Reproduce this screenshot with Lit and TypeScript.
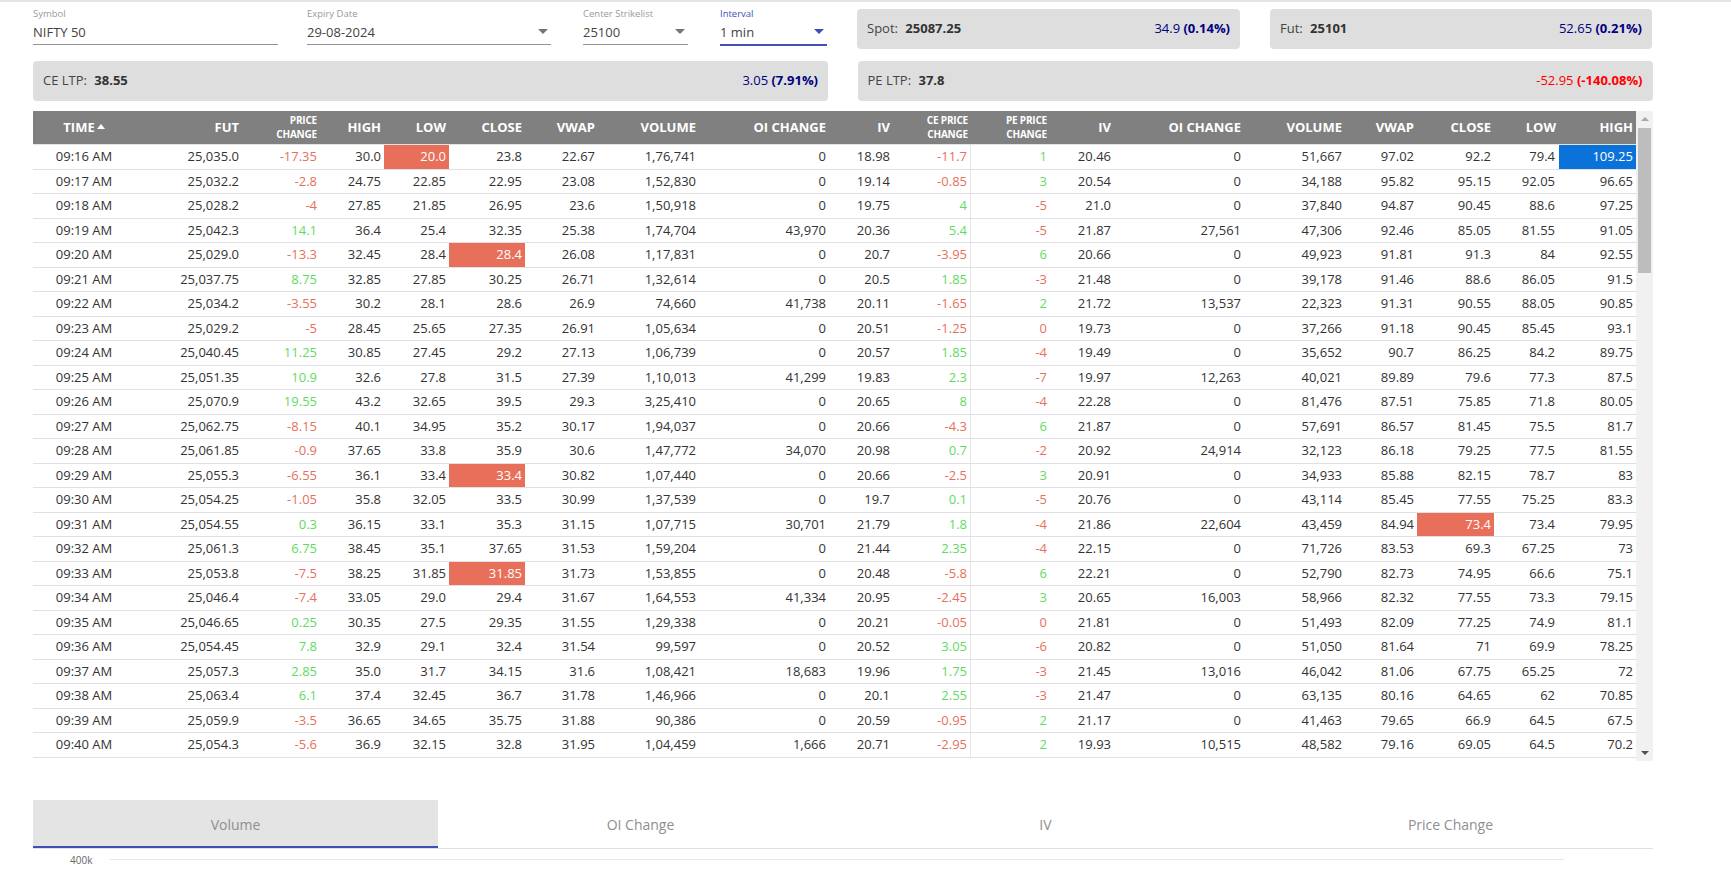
import { LitElement, html, css } from "lit";
import { customElement } from "lit/decorators.js";

const RAW = `09:16 AM|25,035.0|-17.35|30.0|20.0|23.8|22.67|1,76,741|0|18.98|-11.7|1|20.46|0|51,667|97.02|92.2|79.4|109.25
09:17 AM|25,032.2|-2.8|24.75|22.85|22.95|23.08|1,52,830|0|19.14|-0.85|3|20.54|0|34,188|95.82|95.15|92.05|96.65
09:18 AM|25,028.2|-4|27.85|21.85|26.95|23.6|1,50,918|0|19.75|4|-5|21.0|0|37,840|94.87|90.45|88.6|97.25
09:19 AM|25,042.3|14.1|36.4|25.4|32.35|25.38|1,74,704|43,970|20.36|5.4|-5|21.87|27,561|47,306|92.46|85.05|81.55|91.05
09:20 AM|25,029.0|-13.3|32.45|28.4|28.4|26.08|1,17,831|0|20.7|-3.95|6|20.66|0|49,923|91.81|91.3|84|92.55
09:21 AM|25,037.75|8.75|32.85|27.85|30.25|26.71|1,32,614|0|20.5|1.85|-3|21.48|0|39,178|91.46|88.6|86.05|91.5
09:22 AM|25,034.2|-3.55|30.2|28.1|28.6|26.9|74,660|41,738|20.11|-1.65|2|21.72|13,537|22,323|91.31|90.55|88.05|90.85
09:23 AM|25,029.2|-5|28.45|25.65|27.35|26.91|1,05,634|0|20.51|-1.25|0|19.73|0|37,266|91.18|90.45|85.45|93.1
09:24 AM|25,040.45|11.25|30.85|27.45|29.2|27.13|1,06,739|0|20.57|1.85|-4|19.49|0|35,652|90.7|86.25|84.2|89.75
09:25 AM|25,051.35|10.9|32.6|27.8|31.5|27.39|1,10,013|41,299|19.83|2.3|-7|19.97|12,263|40,021|89.89|79.6|77.3|87.5
09:26 AM|25,070.9|19.55|43.2|32.65|39.5|29.3|3,25,410|0|20.65|8|-4|22.28|0|81,476|87.51|75.85|71.8|80.05
09:27 AM|25,062.75|-8.15|40.1|34.95|35.2|30.17|1,94,037|0|20.66|-4.3|6|21.87|0|57,691|86.57|81.45|75.5|81.7
09:28 AM|25,061.85|-0.9|37.65|33.8|35.9|30.6|1,47,772|34,070|20.98|0.7|-2|20.92|24,914|32,123|86.18|79.25|77.5|81.55
09:29 AM|25,055.3|-6.55|36.1|33.4|33.4|30.82|1,07,440|0|20.66|-2.5|3|20.91|0|34,933|85.88|82.15|78.7|83
09:30 AM|25,054.25|-1.05|35.8|32.05|33.5|30.99|1,37,539|0|19.7|0.1|-5|20.76|0|43,114|85.45|77.55|75.25|83.3
09:31 AM|25,054.55|0.3|36.15|33.1|35.3|31.15|1,07,715|30,701|21.79|1.8|-4|21.86|22,604|43,459|84.94|73.4|73.4|79.95
09:32 AM|25,061.3|6.75|38.45|35.1|37.65|31.53|1,59,204|0|21.44|2.35|-4|22.15|0|71,726|83.53|69.3|67.25|73
09:33 AM|25,053.8|-7.5|38.25|31.85|31.85|31.73|1,53,855|0|20.48|-5.8|6|22.21|0|52,790|82.73|74.95|66.6|75.1
09:34 AM|25,046.4|-7.4|33.05|29.0|29.4|31.67|1,64,553|41,334|20.95|-2.45|3|20.65|16,003|58,966|82.32|77.55|73.3|79.15
09:35 AM|25,046.65|0.25|30.35|27.5|29.35|31.55|1,29,338|0|20.21|-0.05|0|21.81|0|51,493|82.09|77.25|74.9|81.1
09:36 AM|25,054.45|7.8|32.9|29.1|32.4|31.54|99,597|0|20.52|3.05|-6|20.82|0|51,050|81.64|71|69.9|78.25
09:37 AM|25,057.3|2.85|35.0|31.7|34.15|31.6|1,08,421|18,683|19.96|1.75|-3|21.45|13,016|46,042|81.06|67.75|65.25|72
09:38 AM|25,063.4|6.1|37.4|32.45|36.7|31.78|1,46,966|0|20.1|2.55|-3|21.47|0|63,135|80.16|64.65|62|70.85
09:39 AM|25,059.9|-3.5|36.65|34.65|35.75|31.88|90,386|0|20.59|-0.95|2|21.17|0|41,463|79.65|66.9|64.5|67.5
09:40 AM|25,054.3|-5.6|36.9|32.15|32.8|31.95|1,04,459|1,666|20.71|-2.95|2|19.93|10,515|48,582|79.16|69.05|64.5|70.2`;

const ROWS = RAW.split("\n").map((l) => l.split("|"));
const WIDTHS = [102, 107, 78, 64, 65, 76, 73, 101, 130, 64, 78, 79, 64, 130, 101, 72, 77, 65, 77];
const HEAD: [string, boolean][] = [
  ["FUT", false], ["PRICE<br>CHANGE", true], ["HIGH", false], ["LOW", false], ["CLOSE", false], ["VWAP", false],
  ["VOLUME", false], ["OI CHANGE", false], ["IV", false], ["CE PRICE<br>CHANGE", true], ["PE PRICE<br>CHANGE", true], ["IV", false],
  ["OI CHANGE", false], ["VOLUME", false], ["VWAP", false], ["CLOSE", false], ["LOW", false], ["HIGH", false],
];
const HILITE: Record<string, string> = {
  "0:4": "hot", "4:5": "hot", "13:5": "hot", "17:5": "hot", "15:16": "hot", "0:18": "cool",
};
const SIGNED = new Set([2, 10, 11]);

function signClass(v: string) {
  return v.startsWith("-") || v === "0" ? "neg" : "pos";
}

@customElement("app-root")
export class AppRoot extends LitElement {
  static styles = css`
    :host { display: block; width: 1731px; height: 869px; overflow: hidden; background: #fff;
      font-family: "Open Sans", sans-serif; color: #333; border-top: 2px solid #e4e4e4; box-sizing: border-box; }
    .page { padding: 0 0 0 33px; width: 1620px; }
    .controls { display: flex; }
    .field { display: flex; flex-direction: column; border-bottom: 1px solid #949494; box-sizing: border-box; height: 43px; }
    .f1 { width: 245px; } .f2 { width: 244px; margin-left: 29px; } .f3 { width: 105px; margin-left: 32px; } .f4 { width: 107px; margin-left: 32px; }
    .lab { font-size: 9.5px; line-height: 12px; color: #9a9a9a; margin-top: 6px; height: 12px; white-space: nowrap; }
    .val { font-size: 13px; line-height: 18px; margin-top: 3px; color: #444; flex: 1; display: flex; align-items: flex-start; justify-content: space-between; }
    .f4 { border-bottom: 2px solid #3f51b5; height: 44px; }
    .f4 .lab { color: #3f51b5; }
    .caret { width: 0; height: 0; border-left: 5.5px solid transparent; border-right: 5.5px solid transparent; border-top: 5.5px solid #757575; margin: 6px 3px 0 0; }
    .f4 .caret { border-top-color: #3f51b5; }
    .box { background: #dedede; border-radius: 4px; height: 40px; display: flex; align-items: center; justify-content: space-between;
      padding: 0 10px 2px; box-sizing: border-box; font-size: 13px; color: #444; }
    .box b { font-weight: 700; color: #333; margin-left: 4px; }
    .chg { color: #000080; }
    .chg b { color: #000080; margin-left: 0; }
    .chg.red, .chg.red b { color: #f00; }
    .row1 { display: flex; height: 59px; }
    .row1 .spot { width: 383px; margin: 7px 0 0 30px; }
    .row1 .fut { width: 382px; margin: 7px 0 0 30px; }
    .row2 { display: flex; height: 50px; }
    .row2 .ce { width: 795px; }
    .row2 .pe { width: 795px; margin-left: 29.5px; }
    .grid { display: flex; height: 650px; width: 1620px; }
    .scroller { width: 1603px; overflow: hidden; }
    table { border-collapse: separate; border-spacing: 0; table-layout: fixed; width: 1603px; }
    th { background: #808080; color: #fff; font-size: 13px; font-weight: 700; text-align: right; height: 34px; padding: 0 3px 1px; box-sizing: border-box; border-bottom: 1px solid #e4e4e4; line-height: 14px; }
    th.small { font-size: 10px; line-height: 14px; letter-spacing: -0.2px; }
    th.time { text-align: center; }
    .sort { display: inline-block; width: 0; height: 0; border-left: 4px solid transparent; border-right: 4px solid transparent; border-bottom: 5px solid #fff; margin-left: 2px; vertical-align: 3px; }
    td { font-size: 13px; text-align: right; height: 24.5px; padding: 0 3px 1px; box-sizing: border-box; border-bottom: 1px solid #e0e0e4; color: #333; line-height: 20px; white-space: nowrap; }
    td.time { text-align: center; }
    td.neg { color: #e8705a; }
    td.pos { color: #5fdc5f; }
    td.sep { border-right: 1px solid #e6e6e6; }
    td.hot { background: #e8705a; color: #fff; }
    td.cool { background: #0b72d9; color: #fff; }
    td.end { padding-right: 4px; }
    .rail { width: 17px; background: #f1f1f1; display: flex; flex-direction: column; align-items: center; }
    .arrow-up { width: 0; height: 0; border-left: 4px solid transparent; border-right: 4px solid transparent; border-bottom: 4px solid #a8a8a8; margin-top: 6px; }
    .thumb { width: 13px; height: 145px; background: #bdbdbd; margin-top: 7px; }
    .arrow-down { width: 0; height: 0; border-left: 4px solid transparent; border-right: 4px solid transparent; border-top: 4px solid #505050; margin-top: auto; margin-bottom: 6px; }
    .tabs { display: grid; grid-template-columns: repeat(4, 405px); width: 1620px; margin-top: 39px; height: 49px; border-bottom: 1px solid #e0e0e0; box-sizing: border-box; }
    .tab { display: flex; align-items: center; justify-content: center; font-size: 14px; color: #8f8f8f; height: 48px; box-sizing: border-box; }
    .tab.on { background: #e4e4e4; border-bottom: 2px solid #3f51b5; padding-top: 2px; }
    .chart { display: flex; align-items: center; height: 20px; width: 1531px; margin-top: 1px; }
    .tick { font-size: 10px; color: #666; margin-left: 37px; width: 40px; line-height: 20px; }
    .gl { flex: 1; height: 1px; background: #e6e6e6; margin-top: -2px; }
  `;

  private cell(r: number, c: number, v: string) {
    const key = `${r}:${c}`;
    const classes = [
      c === 0 ? "time" : "",
      c === 10 ? "sep" : "",
      c === 17 ? "end" : "",
      HILITE[key] ?? (SIGNED.has(c) ? signClass(v) : ""),
    ].join(" ");
    return html`<td class=${classes}>${v}</td>`;
  }

  render() {
    return html`<div class="page">
      <div class="row1">
        <div class="controls">
          <div class="field f1"><div class="lab">Symbol</div><div class="val">NIFTY 50</div></div>
          <div class="field f2"><div class="lab">Expiry Date</div><div class="val">29-08-2024<span class="caret"></span></div></div>
          <div class="field f3"><div class="lab">Center Strikelist</div><div class="val">25100<span class="caret"></span></div></div>
          <div class="field f4"><div class="lab">Interval</div><div class="val">1 min<span class="caret"></span></div></div>
        </div>
        <div class="box spot"><span>Spot: <b>25087.25</b></span><span class="chg">34.9 <b>(0.14%)</b></span></div>
        <div class="box fut"><span>Fut: <b>25101</b></span><span class="chg">52.65 <b>(0.21%)</b></span></div>
      </div>
      <div class="row2">
        <div class="box ce"><span>CE LTP: <b>38.55</b></span><span class="chg">3.05 <b>(7.91%)</b></span></div>
        <div class="box pe"><span>PE LTP: <b>37.8</b></span><span class="chg red">-52.95 <b>(-140.08%)</b></span></div>
      </div>
      <div class="grid">
        <div class="scroller">
          <table>
            <colgroup>${WIDTHS.map((w) => html`<col style="width:${w}px" />`)}</colgroup>
            <thead><tr>
              <th class="time">TIME<span class="sort"></span></th>
              ${HEAD.map(([t, small]) => html`<th class=${small ? "small" : ""}>${t.includes("<br>") ? html`${t.split("<br>")[0]}<br />${t.split("<br>")[1]}` : t}</th>`)}
            </tr></thead>
            <tbody>${ROWS.map((row, r) => html`<tr>${row.map((v, c) => this.cell(r, c, v))}</tr>`)}</tbody>
          </table>
        </div>
        <div class="rail"><div class="arrow-up"></div><div class="thumb"></div><div class="arrow-down"></div></div>
      </div>
      <div class="tabs">
        <div class="tab on">Volume</div><div class="tab">OI Change</div><div class="tab">IV</div><div class="tab">Price Change</div>
      </div>
      <div class="chart"><span class="tick">400k</span><div class="gl"></div></div>
    </div>`;
  }
}
